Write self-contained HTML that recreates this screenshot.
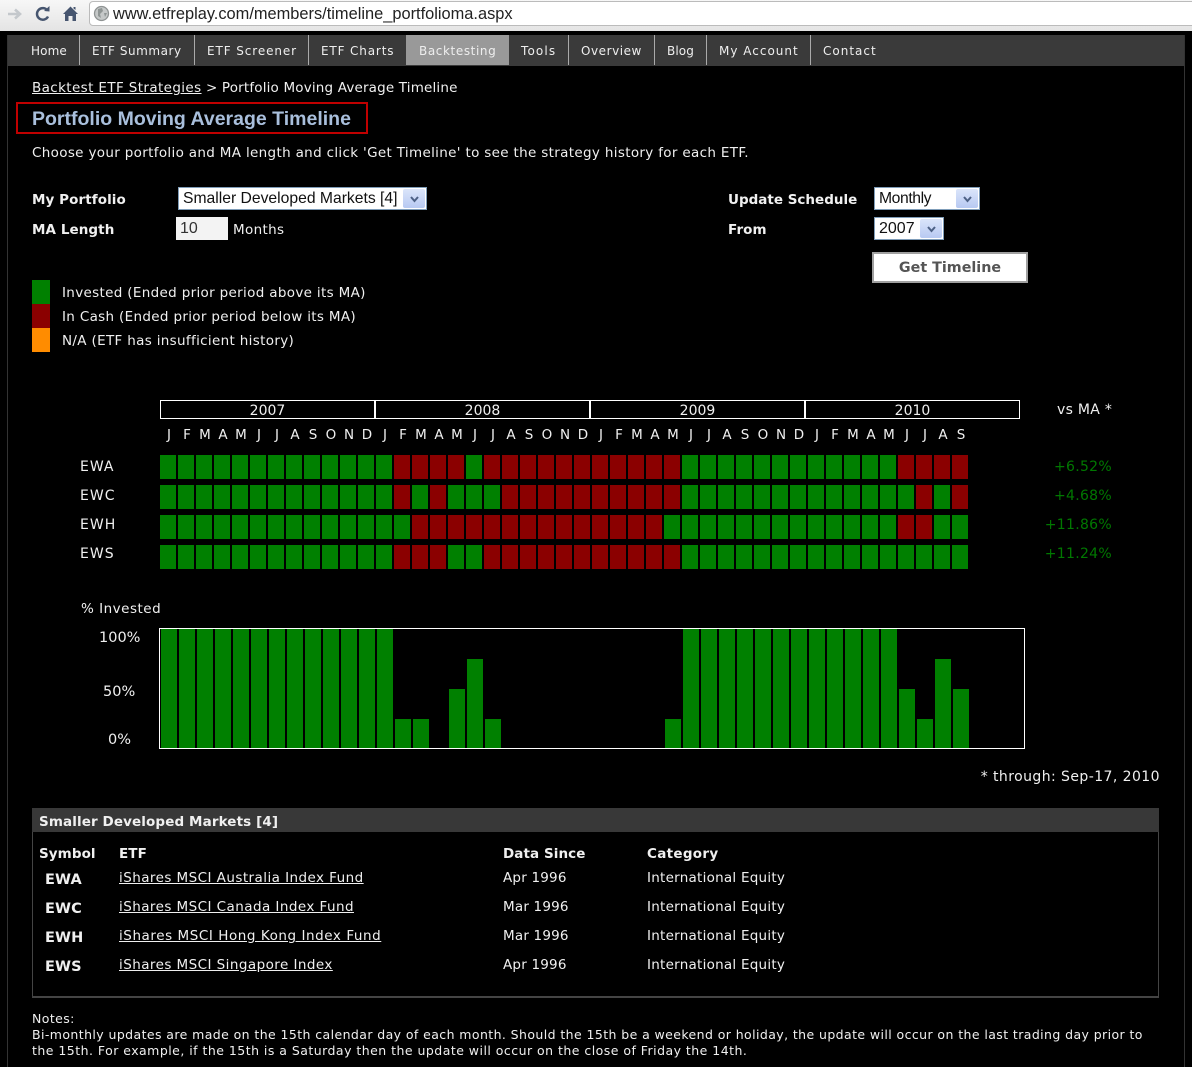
<!DOCTYPE html>
<html><head><meta charset="utf-8"><title>Portfolio Moving Average Timeline</title>
<style>
html,body{margin:0;padding:0;background:#000;}
body{position:relative;width:1192px;height:1067px;overflow:hidden;font-family:"DejaVu Sans","Liberation Sans",sans-serif;font-size:13.5px;letter-spacing:.33px;color:#f0f0f0;}
.a,.t{position:absolute;}
.t{white-space:nowrap;line-height:16px;}
.b{font-weight:bold;letter-spacing:.08px;}
.u{text-decoration:underline;}
.r{text-align:right;}
.c{text-align:center;}
.nav{color:#eee;top:43px;font-size:12px;}
.sep{position:absolute;top:35px;width:1px;height:30px;background:#aaa;}
.sel{position:absolute;background:#fff;border:1px solid #7f9db9;box-sizing:border-box;color:#111;font:15.7px/21px "Liberation Sans",sans-serif;letter-spacing:0;padding-left:4px;white-space:nowrap;}
.sel i{position:absolute;right:1px;top:1px;bottom:1px;width:22px;background:linear-gradient(#dbe5fa,#b7c9f2);border-radius:2px;}
.sel svg{position:absolute;left:7px;top:6px;}
.row{position:absolute;left:160px;display:flex;gap:2px;height:24px;}
.row s{display:block;width:16px;height:24px;background:#008000;text-decoration:none;}
.row s.x{background:#8b0000;}
.yr{position:absolute;top:400px;height:19px;width:215px;box-sizing:border-box;border:1px solid #fff;text-align:center;line-height:19px;font-size:14px;letter-spacing:0;padding-top:1px;}
.m{position:absolute;top:427px;width:18px;text-align:center;line-height:16px;font-size:13.5px;letter-spacing:0;}
.tk{left:80px;font-size:14px;letter-spacing:1px;}
.pct{color:#007800;left:1000px;width:112px;text-align:right;font-size:14px;letter-spacing:.3px;}
.ax{font-size:14.500px;letter-spacing:0;}
.sy{left:45px;font-size:14.500px;letter-spacing:.1px;}
.bar{position:absolute;width:16px;bottom:319px;background:#008000;}
.note{left:32px;font-size:12.500px;letter-spacing:.41px;}
</style></head><body>

<!-- browser chrome -->
<div class="a" style="left:0;top:0;width:1192px;height:31px;background:linear-gradient(#f7f7f7,#e4e4e4);"></div>
<div class="a" style="left:89px;top:1px;width:1110px;height:25px;background:#fff;border:1px solid #bbb;border-radius:4px 0 0 4px;box-sizing:border-box;"></div>
<svg class="a" style="left:0;top:0" width="90" height="28" viewBox="0 0 90 28">
<path d="M8 14H19M15 9.500L20 14L15 18.500" fill="none" stroke="#c4c8cc" stroke-width="2.600"/>
<path d="M47.500 10.500A5.800 5.800 0 1 0 48 16.500" fill="none" stroke="#46556f" stroke-width="2.500"/>
<path d="M44 11L49.500 11.500L49.500 6Z" fill="#46556f"/>
<path d="M63 14L70.500 6.500L78 14L76 14L76 21L72.500 21L72.500 16L68.500 16L68.500 21L65 21L65 14Z" fill="#46556f"/>
<path d="M73.500 7H75.500V10L73.500 8.500Z" fill="#46556f"/>
</svg>
<svg class="a" style="left:93px;top:5px" width="17" height="17" viewBox="0 0 17 17"><circle cx="8.500" cy="8.500" r="7" fill="#c5c8c8" stroke="#8f9393" stroke-width="1.300"/><path d="M5 4L9 3L10 6L7 9L8 13L5 11Z M11 8L14 8L12 12Z" fill="#8f9594"/></svg>
<div class="t" style="left:113px;top:5px;font:16.400px/18px 'Liberation Sans',sans-serif;letter-spacing:0;color:#222;">www.etfreplay.com/members/timeline_portfolioma.aspx</div>

<!-- page frame -->
<div class="a" style="left:7px;top:35px;width:1px;height:1032px;background:#333;"></div>
<div class="a" style="left:1184px;top:35px;width:1px;height:1032px;background:#333;"></div>

<!-- nav -->
<div class="a" style="left:8px;top:35px;width:1176px;height:31px;background:#3a3a3a;"></div>
<div class="a" style="left:406px;top:35px;width:103px;height:30px;background:#999;"></div>
<div class="sep" style="left:79px"></div><div class="sep" style="left:194px"></div><div class="sep" style="left:308px"></div><div class="sep" style="left:568px"></div><div class="sep" style="left:654px"></div><div class="sep" style="left:706px"></div><div class="sep" style="left:810px"></div>
<div class="t nav" style="left:31px;letter-spacing:.1px">Home</div>
<div class="t nav" style="left:92px;letter-spacing:.55px">ETF Summary</div>
<div class="t nav" style="left:207px;letter-spacing:.9px">ETF Screener</div>
<div class="t nav" style="left:321px;letter-spacing:.85px">ETF Charts</div>
<div class="t nav" style="left:419px;letter-spacing:.6px">Backtesting</div>
<div class="t nav" style="left:521px;letter-spacing:1.150px">Tools</div>
<div class="t nav" style="left:581px;letter-spacing:.55px">Overview</div>
<div class="t nav" style="left:667px;letter-spacing:.1px">Blog</div>
<div class="t nav" style="left:719px;letter-spacing:1px">My Account</div>
<div class="t nav" style="left:823px;letter-spacing:1px">Contact</div>

<!-- heading -->
<div class="t" style="left:32px;top:80px;letter-spacing:.17px"><span class="u" style="letter-spacing:.38px">Backtest ETF Strategies</span> &gt; Portfolio Moving Average Timeline</div>
<div class="a" style="left:16px;top:102px;width:352px;height:32px;border:2px solid #c00000;box-sizing:border-box;"></div>
<div class="t" style="left:32px;top:108px;font:bold 19.500px/23px 'Liberation Sans',sans-serif;letter-spacing:0;color:#a9bfdc;">Portfolio Moving Average Timeline</div>
<div class="t" style="left:32px;top:145px;">Choose your portfolio and MA length and click 'Get Timeline' to see the strategy history for each ETF.</div>

<!-- form -->
<div class="t b" style="left:32px;top:192px;">My Portfolio</div>
<div class="sel" style="left:178px;top:187px;width:249px;height:23px;">Smaller Developed Markets [4]<i><svg width="9" height="9"><path d="M1 2L4.500 6L8 2" fill="none" stroke="#4d6185" stroke-width="2"/></svg></i></div>
<div class="t b" style="left:32px;top:222px;">MA Length</div>
<div class="a" style="left:176px;top:217px;width:52px;height:23px;background:#f3f3f3;color:#333;font:16px/23px 'Liberation Sans',sans-serif;letter-spacing:0;padding-left:4px;box-sizing:border-box;">10</div>
<div class="t" style="left:233px;top:222px;">Months</div>

<div class="t b" style="left:728px;top:192px;letter-spacing:0">Update Schedule</div>
<div class="sel" style="left:874px;top:187px;width:106px;height:23px;letter-spacing:-.4px">Monthly<i><svg width="9" height="9"><path d="M1 2L4.500 6L8 2" fill="none" stroke="#4d6185" stroke-width="2"/></svg></i></div>
<div class="t b" style="left:728px;top:222px;">From</div>
<div class="sel" style="left:874px;top:217px;width:70px;height:23px;font-size:16px">2007<i><svg width="9" height="9"><path d="M1 2L4.500 6L8 2" fill="none" stroke="#4d6185" stroke-width="2"/></svg></i></div>
<div class="a b c" style="left:872px;top:252px;width:156px;height:31px;background:#fff;border:2px solid #a0a0a0;box-sizing:border-box;color:#555;font-size:14.300px;line-height:29px;letter-spacing:0;">Get Timeline</div>

<!-- legend -->
<div class="a" style="left:32px;top:280px;width:18px;height:24px;background:#008000;"></div>
<div class="a" style="left:32px;top:304px;width:18px;height:24px;background:#8b0000;"></div>
<div class="a" style="left:32px;top:328px;width:18px;height:24px;background:#ff8c00;"></div>
<div class="t" style="left:62px;top:285px;">Invested (Ended prior period above its MA)</div>
<div class="t" style="left:62px;top:309px;">In Cash (Ended prior period below its MA)</div>
<div class="t" style="left:62px;top:333px;">N/A (ETF has insufficient history)</div>

<!-- years -->
<div class="yr" style="left:160px">2007</div>
<div class="yr" style="left:375px">2008</div>
<div class="yr" style="left:590px">2009</div>
<div class="yr" style="left:805px">2010</div>
<div class="t" style="left:1057px;top:402px;font-size:14px;letter-spacing:.3px">vs MA *</div>

<!-- months -->
<div class="m" style="left:160px">J</div><div class="m" style="left:178px">F</div><div class="m" style="left:196px">M</div><div class="m" style="left:214px">A</div><div class="m" style="left:232px">M</div><div class="m" style="left:250px">J</div><div class="m" style="left:268px">J</div><div class="m" style="left:286px">A</div><div class="m" style="left:304px">S</div><div class="m" style="left:322px">O</div><div class="m" style="left:340px">N</div><div class="m" style="left:358px">D</div>
<div class="m" style="left:376px">J</div><div class="m" style="left:394px">F</div><div class="m" style="left:412px">M</div><div class="m" style="left:430px">A</div><div class="m" style="left:448px">M</div><div class="m" style="left:466px">J</div><div class="m" style="left:484px">J</div><div class="m" style="left:502px">A</div><div class="m" style="left:520px">S</div><div class="m" style="left:538px">O</div><div class="m" style="left:556px">N</div><div class="m" style="left:574px">D</div>
<div class="m" style="left:592px">J</div><div class="m" style="left:610px">F</div><div class="m" style="left:628px">M</div><div class="m" style="left:646px">A</div><div class="m" style="left:664px">M</div><div class="m" style="left:682px">J</div><div class="m" style="left:700px">J</div><div class="m" style="left:718px">A</div><div class="m" style="left:736px">S</div><div class="m" style="left:754px">O</div><div class="m" style="left:772px">N</div><div class="m" style="left:790px">D</div>
<div class="m" style="left:808px">J</div><div class="m" style="left:826px">F</div><div class="m" style="left:844px">M</div><div class="m" style="left:862px">A</div><div class="m" style="left:880px">M</div><div class="m" style="left:898px">J</div><div class="m" style="left:916px">J</div><div class="m" style="left:934px">A</div><div class="m" style="left:952px">S</div>

<!-- tickers -->
<div class="t tk" style="top:459px">EWA</div>
<div class="t tk" style="top:488px">EWC</div>
<div class="t tk" style="top:517px">EWH</div>
<div class="t tk" style="top:546px">EWS</div>

<!-- EWA -->
<div class="row" style="top:455px"><s></s><s></s><s></s><s></s><s></s><s></s><s></s><s></s><s></s><s></s><s></s><s></s><s></s><s class="x"></s><s class="x"></s><s class="x"></s><s class="x"></s><s></s><s class="x"></s><s class="x"></s><s class="x"></s><s class="x"></s><s class="x"></s><s class="x"></s><s class="x"></s><s class="x"></s><s class="x"></s><s class="x"></s><s class="x"></s><s></s><s></s><s></s><s></s><s></s><s></s><s></s><s></s><s></s><s></s><s></s><s></s><s class="x"></s><s class="x"></s><s class="x"></s><s class="x"></s></div>
<!-- EWC -->
<div class="row" style="top:485px"><s></s><s></s><s></s><s></s><s></s><s></s><s></s><s></s><s></s><s></s><s></s><s></s><s></s><s class="x"></s><s></s><s class="x"></s><s></s><s></s><s></s><s class="x"></s><s class="x"></s><s class="x"></s><s class="x"></s><s class="x"></s><s class="x"></s><s class="x"></s><s class="x"></s><s class="x"></s><s class="x"></s><s></s><s></s><s></s><s></s><s></s><s></s><s></s><s></s><s></s><s></s><s></s><s></s><s></s><s class="x"></s><s></s><s class="x"></s></div>
<!-- EWH -->
<div class="row" style="top:515px"><s></s><s></s><s></s><s></s><s></s><s></s><s></s><s></s><s></s><s></s><s></s><s></s><s></s><s></s><s class="x"></s><s class="x"></s><s class="x"></s><s class="x"></s><s class="x"></s><s class="x"></s><s class="x"></s><s class="x"></s><s class="x"></s><s class="x"></s><s class="x"></s><s class="x"></s><s class="x"></s><s class="x"></s><s></s><s></s><s></s><s></s><s></s><s></s><s></s><s></s><s></s><s></s><s></s><s></s><s></s><s class="x"></s><s class="x"></s><s></s><s></s></div>
<!-- EWS -->
<div class="row" style="top:545px"><s></s><s></s><s></s><s></s><s></s><s></s><s></s><s></s><s></s><s></s><s></s><s></s><s></s><s class="x"></s><s class="x"></s><s class="x"></s><s></s><s></s><s class="x"></s><s class="x"></s><s class="x"></s><s class="x"></s><s class="x"></s><s class="x"></s><s class="x"></s><s class="x"></s><s class="x"></s><s class="x"></s><s class="x"></s><s></s><s></s><s></s><s></s><s></s><s></s><s></s><s></s><s></s><s></s><s></s><s></s><s></s><s></s><s></s><s></s></div>

<div class="t pct" style="top:459px">+6.52%</div>
<div class="t pct" style="top:488px">+4.68%</div>
<div class="t pct" style="top:517px">+11.86%</div>
<div class="t pct" style="top:546px">+11.24%</div>

<!-- chart -->
<div class="t" style="left:81px;top:601px;letter-spacing:.5px">% Invested</div>
<div class="t ax" style="left:99px;top:630px;">100%</div>
<div class="t ax" style="left:103px;top:684px;">50%</div>
<div class="t ax" style="left:108px;top:732px;">0%</div>
<div class="a" style="left:159px;top:628px;width:866px;height:121px;border:1px solid #fff;box-sizing:border-box;"></div>
<div class="bar" style="left:161px;height:119px"></div><div class="bar" style="left:179px;height:119px"></div><div class="bar" style="left:197px;height:119px"></div><div class="bar" style="left:215px;height:119px"></div><div class="bar" style="left:233px;height:119px"></div><div class="bar" style="left:251px;height:119px"></div><div class="bar" style="left:269px;height:119px"></div><div class="bar" style="left:287px;height:119px"></div><div class="bar" style="left:305px;height:119px"></div><div class="bar" style="left:323px;height:119px"></div><div class="bar" style="left:341px;height:119px"></div><div class="bar" style="left:359px;height:119px"></div><div class="bar" style="left:377px;height:119px"></div>
<div class="bar" style="left:395px;height:29px"></div><div class="bar" style="left:413px;height:29px"></div><div class="bar" style="left:449px;height:59px"></div><div class="bar" style="left:467px;height:89px"></div><div class="bar" style="left:485px;height:29px"></div>
<div class="bar" style="left:665px;height:29px"></div>
<div class="bar" style="left:683px;height:119px"></div><div class="bar" style="left:701px;height:119px"></div><div class="bar" style="left:719px;height:119px"></div><div class="bar" style="left:737px;height:119px"></div><div class="bar" style="left:755px;height:119px"></div><div class="bar" style="left:773px;height:119px"></div><div class="bar" style="left:791px;height:119px"></div><div class="bar" style="left:809px;height:119px"></div><div class="bar" style="left:827px;height:119px"></div><div class="bar" style="left:845px;height:119px"></div><div class="bar" style="left:863px;height:119px"></div><div class="bar" style="left:881px;height:119px"></div>
<div class="bar" style="left:899px;height:59px"></div><div class="bar" style="left:917px;height:29px"></div><div class="bar" style="left:935px;height:89px"></div><div class="bar" style="left:953px;height:59px"></div>
<div class="t r" style="left:900px;width:260px;top:769px;font-size:14px;letter-spacing:.43px">* through: Sep-17, 2010</div>

<!-- panel -->
<div class="a" style="left:32px;top:808px;width:1127px;height:190px;border:1px solid #444;border-bottom-width:2px;box-sizing:border-box;"></div>
<div class="a" style="left:32px;top:808px;width:1127px;height:24px;background:#383838;"></div>
<div class="t b" style="left:39px;top:814px;letter-spacing:.11px">Smaller Developed Markets [4]</div>
<div class="t b" style="left:39px;top:846px;">Symbol</div>
<div class="t b" style="left:119px;top:846px;">ETF</div>
<div class="t b" style="left:503px;top:846px;">Data Since</div>
<div class="t b" style="left:647px;top:846px;letter-spacing:.3px">Category</div>

<div class="t b sy" style="top:872px;">EWA</div>
<div class="t u" style="left:119px;top:870px;letter-spacing:.44px">iShares MSCI Australia Index Fund</div>
<div class="t" style="left:503px;top:870px;letter-spacing:.2px">Apr 1996</div>
<div class="t" style="left:647px;top:870px;letter-spacing:.25px">International Equity</div>

<div class="t b sy" style="top:901px;">EWC</div>
<div class="t u" style="left:119px;top:899px;letter-spacing:.44px">iShares MSCI Canada Index Fund</div>
<div class="t" style="left:503px;top:899px;letter-spacing:.2px">Mar 1996</div>
<div class="t" style="left:647px;top:899px;letter-spacing:.25px">International Equity</div>

<div class="t b sy" style="top:930px;">EWH</div>
<div class="t u" style="left:119px;top:928px;letter-spacing:.56px">iShares MSCI Hong Kong Index Fund</div>
<div class="t" style="left:503px;top:928px;letter-spacing:.2px">Mar 1996</div>
<div class="t" style="left:647px;top:928px;letter-spacing:.25px">International Equity</div>

<div class="t b sy" style="top:959px;">EWS</div>
<div class="t u" style="left:119px;top:957px;letter-spacing:.44px">iShares MSCI Singapore Index</div>
<div class="t" style="left:503px;top:957px;letter-spacing:.2px">Apr 1996</div>
<div class="t" style="left:647px;top:957px;letter-spacing:.25px">International Equity</div>

<!-- notes -->
<div class="t note" style="top:1011px;">Notes:</div>
<div class="t note" style="top:1027px;">Bi-monthly updates are made on the 15th calendar day of each month. Should the 15th be a weekend or holiday, the update will occur on the last trading day prior to</div>
<div class="t note" style="top:1043px;letter-spacing:.47px">the 15th. For example, if the 15th is a Saturday then the update will occur on the close of Friday the 14th.</div>
</body></html>
